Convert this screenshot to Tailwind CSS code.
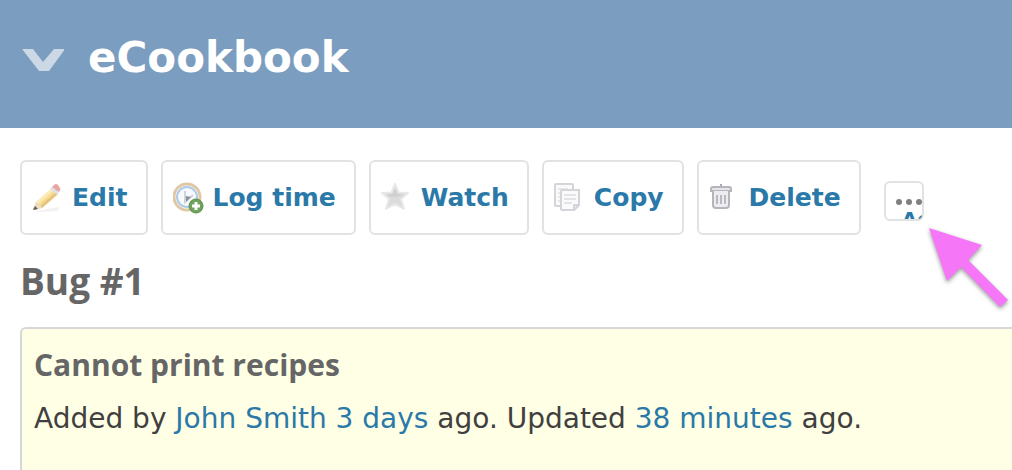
<!DOCTYPE html>
<html lang="en">
<head>
    <meta charset="UTF-8">
    <meta name="viewport" content="width=device-width, initial-scale=1.0">
    <title>Bug #1: Cannot print recipes - eCookbook</title>
    <script src="https://cdn.jsdelivr.net/npm/@tailwindcss/browser@4"></script>
</head>
<body class="min-h-screen flex flex-col overflow-x-hidden bg-white text-[#404040] font-['DejaVu_Sans',sans-serif]">
    <!-- Project header -->
    <header class="h-32 shrink-0 bg-[#7a9dc0] px-5 pt-7">
        <a href="#" class="inline-flex items-center gap-6">
            <svg class="w-11 h-6 mt-1" viewBox="0 0 44 24" fill="#ccd8e5"><path d="M2 1H13L23 14L34 1H45L29 23H19Z"/></svg>
            <h1 class="text-[42px] leading-[60px] font-bold text-white">eCookbook</h1>
        </a>
    </header>

    <main class="flex flex-col grow pl-5 pt-8">
        <!-- Issue actions -->
        <nav class="flex items-center gap-[13px] text-[#2a79a8] font-bold text-[25px] leading-8">
            <a href="#" class="flex items-center gap-2 h-[75px] pl-2.5 pr-[18px] border-2 border-[#e2e2e2] rounded-md">
                <svg class="w-8 h-8" viewBox="0 0 32 32">
                    <path d="M4 29L27 25L26 29L8 30Z" fill="#f2f2f2"/>
                    <path d="M1 28L4 20L20 6L26 12L10 26Z" fill="#f7dc92"/>
                    <path d="M4 20L20 6L22 8L6 22Z" fill="#fbecbc"/>
                    <path d="M8 24L24 10L26 12L10 26Z" fill="#e6c27a"/>
                    <path d="M1 28L4 20Q8 21 10 26Z" fill="#efdcc0"/>
                    <path d="M1 28L3 24L6 27Z" fill="#5c5c5c"/>
                    <path d="M18 7L21 4L27 10L25 13Z" fill="#dfe0e3"/>
                    <path d="M20 5L22 3Q24 1 26 3L28 6Q29 8 27 10Z" fill="#eaa5a3"/>
                </svg>
                Edit
            </a>
            <a href="#" class="flex items-center gap-2 h-[75px] pl-2.5 pr-[18px] border-2 border-[#e2e2e2] rounded-md">
                <svg class="w-8 h-8" viewBox="0 0 32 32">
                    <circle cx="14" cy="15" r="13" fill="#fff" stroke="#dfc8a4" stroke-width="3"/>
                    <circle cx="14" cy="15" r="10" fill="#f6f9fd" stroke="#b0c9e8" stroke-width="2"/>
                    <path d="M12 9V20L20 13" fill="none" stroke="#d0d3d8" stroke-width="2"/>
                    <path d="M13 14V20L18 15Z" fill="#8b9199"/>
                    <circle cx="23" cy="24" r="7" fill="#6fa35c" stroke="#5c9049"/>
                    <path d="M23 20V28M19 24H27" stroke="#fff" stroke-width="3"/>
                </svg>
                Log time
            </a>
            <a href="#" class="flex items-center gap-2 h-[75px] pl-2.5 pr-[18px] border-2 border-[#e2e2e2] rounded-md">
                <svg class="w-8 h-8" viewBox="0 0 32 32">
                    <path d="M14 2L17.500 10.500L27 11L20 17L23 27L14 22L5 27L8 17L1 11L10.500 10.500Z" fill="#dcdcdc" stroke="#e8e8e8" stroke-width="2" stroke-linejoin="round"/>
                    <path d="M14 6L16.500 12L23 12.500L17 14.500L9 15L5 12.500L11.500 12Z" fill="#d0d0d0"/>
                </svg>
                Watch
            </a>
            <a href="#" class="flex items-center gap-2 h-[75px] pl-2.5 pr-[18px] border-2 border-[#e2e2e2] rounded-md">
                <svg class="w-8 h-8" viewBox="0 0 32 32" fill="#fafafa" stroke="#d4d4da" stroke-width="2">
                    <rect x="1" y="2" width="18" height="22" rx="1"/>
                    <path d="M4 7H14M4 11H7M4 15H7M4 19H7" stroke="#e6e6e9"/>
                    <path d="M8 8H25V23L20 28H8Q7 28 7 27V9Q7 8 8 8Z"/>
                    <path d="M10 13H22M10 17H22M10 21H18" stroke="#e4e4e8"/>
                    <path d="M20 28V23H25Z" stroke-linejoin="round"/>
                </svg>
                Copy
            </a>
            <a href="#" class="flex items-center gap-2 h-[75px] pl-2.5 pr-[18px] border-2 border-[#e2e2e2] rounded-md">
                <svg class="w-8 h-8" viewBox="0 0 32 32" fill="none" stroke="#b5b5bd" stroke-width="2">
                    <path d="M12 4V2" stroke="#a9a9b1"/>
                    <path d="M2 9V7Q2 5 4 5H20Q22 5 22 7V9Z" fill="#e6e6e9"/>
                    <path d="M4 9V23Q4 26 7 26H17Q20 26 20 23V9" fill="#ededf0"/>
                    <path d="M8 13V22M12 13V22M16 13V22" stroke="#b9b9c1"/>
                </svg>
                Delete
            </a>
            <div class="relative ml-2.5 mt-1.5">
                <button type="button" class="block w-10 h-10 pl-2.5 pt-3 border-2 border-[#e2e2e2] rounded-md overflow-hidden text-left cursor-pointer">
                    <svg class="w-8 h-4" viewBox="0 0 32 16" fill="#808080"><circle cx="3" cy="7" r="3"/><circle cx="13" cy="7" r="3"/><circle cx="23" cy="7" r="3"/></svg>
                    <span class="block pl-1.5 text-xl leading-4 font-bold">Actions</span>
                </button>
                <!-- Pointer to the actions menu -->
                <svg class="absolute left-full top-full w-24 h-24 mt-1 ml-1 overflow-visible pointer-events-none drop-shadow-[0_2px_2px_rgba(0,0,0,0.4)]" viewBox="0 0 96 96" fill="#f577f7"><path d="M1 3L54 20L40 35L80 75L72 82L33 42L19 56Z"/></svg>
            </div>
        </nav>

        <h2 class="mt-6 text-[37px] leading-[44px] font-bold text-[#666] font-['Open_Sans',sans-serif]">Bug #1</h2>

        <!-- Issue details -->
        <section class="grow mt-6 pl-3 pt-4 border-t-2 border-l-2 border-[#d7d7d7] rounded-tl-md bg-[#ffffe5]">
            <h3 class="text-[30px] leading-10 font-bold text-[#666] font-['Open_Sans',sans-serif]">Cannot print recipes</h3>
            <p class="mt-4 text-[28px] leading-9">Added by <a href="#" class="text-[#2a79a8]">John Smith</a> <a href="#" class="text-[#2a79a8]">3 days</a> ago. Updated <a href="#" class="text-[#2a79a8]">38 minutes</a> ago.</p>
        </section>
    </main>
</body>
</html>
